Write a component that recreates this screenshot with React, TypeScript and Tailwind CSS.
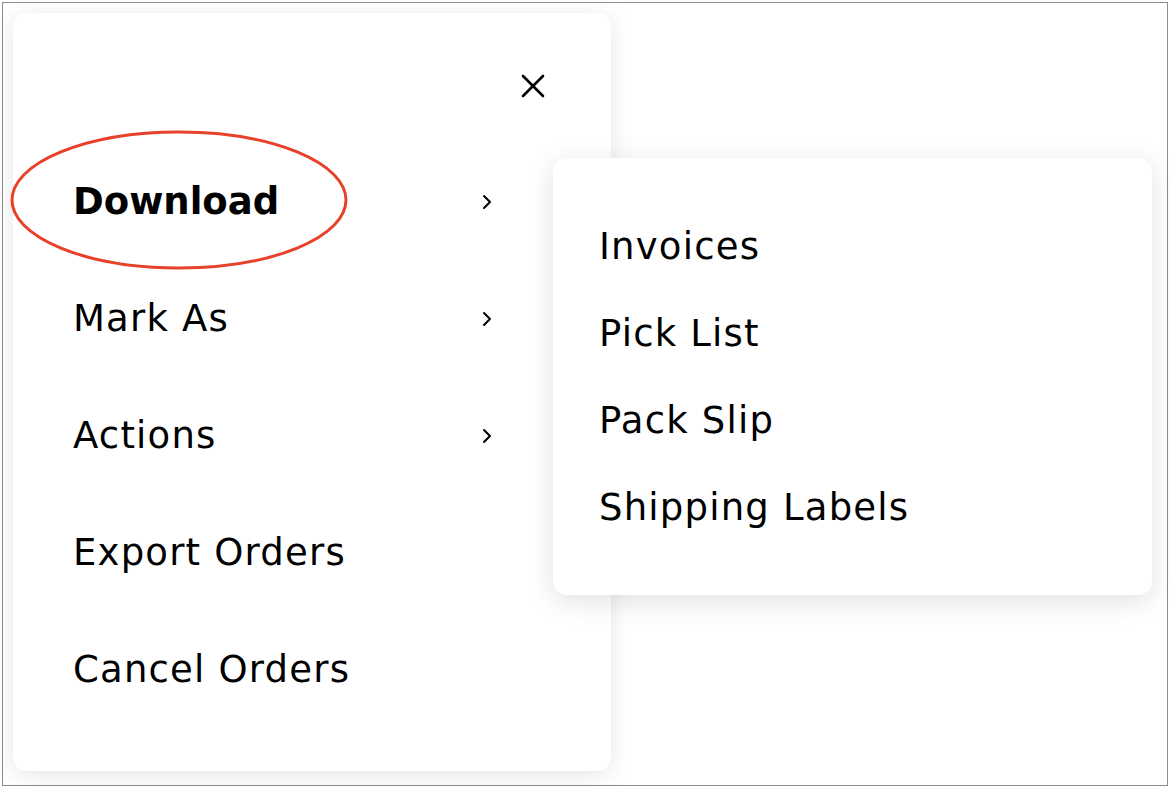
import React from 'react';

const font = { fontFamily: '"DejaVu Sans", "Noto Sans", sans-serif' };

const Chevron = () => (
  <svg width="14" height="18" viewBox="0 0 14 18" fill="none" className="text-black">
    <path d="M4 3l6 6-6 6" stroke="currentColor" strokeWidth="2" strokeLinecap="round" strokeLinejoin="round" />
  </svg>
);

const App = () => {
  const items = [
    { label: 'Download', sub: true, active: true },
    { label: 'Mark As', sub: true },
    { label: 'Actions', sub: true },
    { label: 'Export Orders' },
    { label: 'Cancel Orders' },
  ];

  const downloads = ['Invoices', 'Pick List', 'Pack Slip', 'Shipping Labels'];

  return (
    <div className="w-[1170px] h-[788px] bg-white p-[2px]" style={font}>
      <div className="relative w-full h-full border border-[#8c8c8c] bg-white p-[10px]">
        {/* main menu */}
        <div className="w-[598px] h-[758px] rounded-[14px] bg-white shadow-[0_4px_24px_rgba(0,0,0,0.10)] flex flex-col">
          <div className="h-[128px] flex justify-end items-start pt-[61px] pr-[66px]">
            <svg width="24" height="24" viewBox="0 0 24 24" fill="none">
              <path d="M2 2l20 20M22 2L2 22" stroke="#000" strokeWidth="2.6" strokeLinecap="round" />
            </svg>
          </div>
          {items.map((item) => (
            <div key={item.label} className="h-[117px] flex items-center justify-between pl-[60px] pr-[117px] pt-[4px]">
              <span className={`text-[37px] text-black ${item.active ? 'font-bold tracking-[0px]' : 'font-normal tracking-[1.2px]'}`}>
                {item.label}
              </span>
              {item.sub && <Chevron />}
            </div>
          ))}
        </div>

        {/* download submenu */}
        <div className="absolute left-[550px] top-[155px] w-[599px] h-[437px] rounded-[14px] bg-white shadow-[0_6px_28px_rgba(0,0,0,0.12)] py-[44px] flex flex-col">
          {downloads.map((d) => (
            <div key={d} className="h-[87px] flex items-center pl-[46px] pt-[2px]">
              <span className="text-[37px] text-black tracking-[1.2px]">{d}</span>
            </div>
          ))}
        </div>

        {/* annotation ring */}
        <svg className="absolute left-[5px] top-[126px] pointer-events-none" width="342" height="142" viewBox="0 0 342 142">
          <ellipse cx="171" cy="71" rx="167" ry="68" fill="none" stroke="#e8412a" strokeWidth="3" />
        </svg>
      </div>
    </div>
  );
};

export default App;
